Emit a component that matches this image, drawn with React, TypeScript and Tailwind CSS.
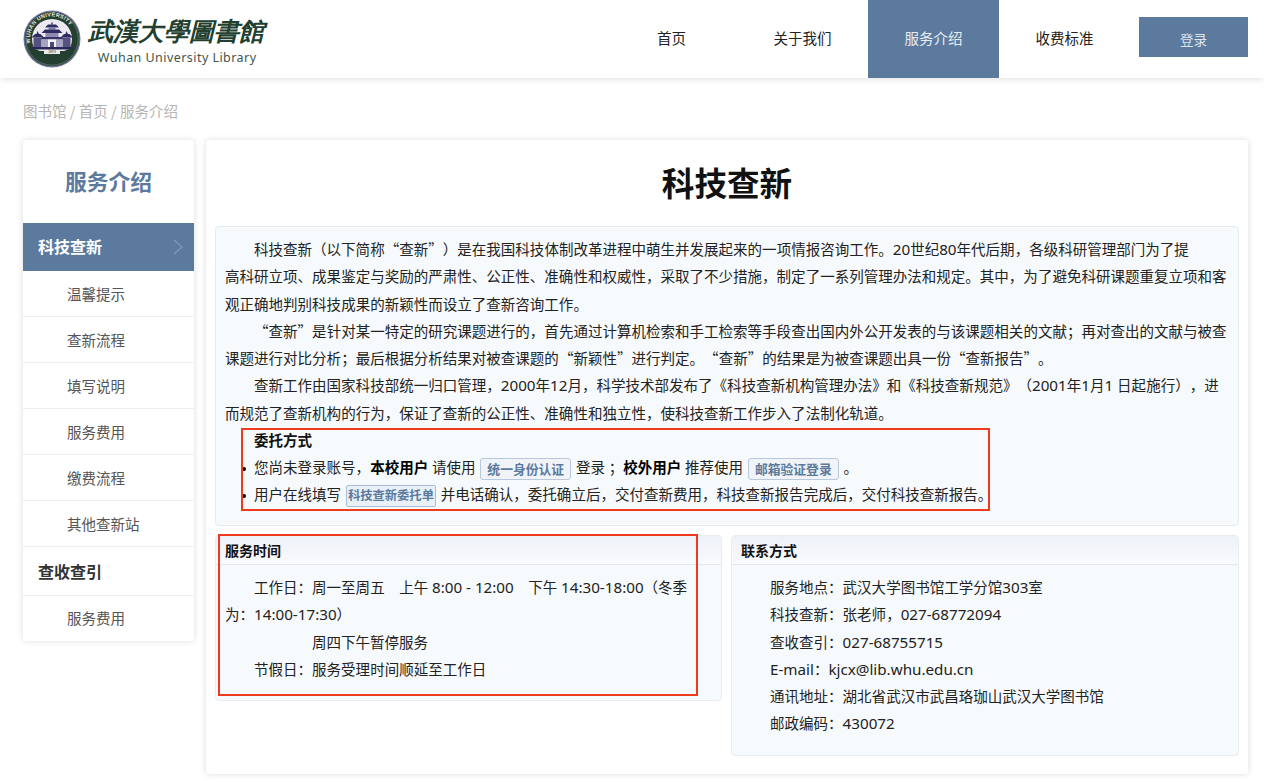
const navItems = [
  { label: "首页", active: false },
  { label: "关于我们", active: false },
  { label: "服务介绍", active: true },
  { label: "收费标准", active: false },
];

const subItems = ["温馨提示", "查新流程", "填写说明", "服务费用", "缴费流程", "其他查新站"];

const contacts = [
  "服务地点：武汉大学图书馆工学分馆303室",
  "科技查新：张老师，027-68772094",
  "查收查引：027-68755715",
  "E-mail：kjcx@lib.whu.edu.cn",
  "通讯地址：湖北省武汉市武昌珞珈山武汉大学图书馆",
  "邮政编码：430072",
];

// curly quotes come from the CJK font so they stay full width, latin runs sit a bit larger
function Zh({ text }: { text: string }) {
  return (
    <>
      {text.split(/([“”]|[0-9A-Za-z@.:-][0-9A-Za-z@.: -]*)/).map((part, i) => {
        if (part === "“" || part === "”") {
          return (
            <span key={i} className="leading-none font-['Noto_Sans_CJK_SC',sans-serif]">
              {part}
            </span>
          );
        }
        if (/^[0-9A-Za-z@.:-]/.test(part)) {
          return (
            <span key={i} className="text-[15.2px] leading-none">
              {part}
            </span>
          );
        }
        return part;
      })}
    </>
  );
}

function Seal() {
  return (
    <svg width="58" height="58" viewBox="0 0 58 58" className="shrink-0">
      <defs>
        <path id="seal-arc" d="M7.5 33A22 22 0 1 1 50.5 33" />
      </defs>
      <circle cx="29" cy="29" r="28.5" fill="#77759c" />
      <circle cx="29" cy="29" r="27.3" fill="#233f30" />
      <circle cx="29" cy="29" r="26.2" fill="none" stroke="#8a9a90" strokeWidth="0.5" />
      <circle cx="29" cy="29" r="20" fill="#eceaf0" />
      <text fontSize="5.4" fontWeight="700" letterSpacing="0.35" fill="#e8ebe6" fontFamily="Liberation Sans, sans-serif">
        <textPath href="#seal-arc">WUHAN UNIVERSITY</textPath>
      </text>
      <path d="M29 11.5l1 3h-2z" fill="#2f2c62" />
      <path d="M25 14.5h8l3 3H22z" fill="#2f2c62" />
      <path d="M25.5 17.5h7v2h-7z" fill="#7a78a0" />
      <path d="M22 19.5h14l3.5 3.5h-21z" fill="#2f2c62" />
      <path d="M22.5 23h13v4h-13z" fill="#8c8aae" />
      <path d="M19 27h20l2 2.5H17z" fill="#37346a" />
      <path d="M14.5 21l1.5 3h1.5l3.5 3.5H8.5L12 24h1.5z" fill="#2f2c62" />
      <path d="M43.5 21l1.5 3h1.5l3.5 3.5H37.5L41 24h1.5z" fill="#2f2c62" />
      <path d="M10.5 27.5h8V37h-8zM39.5 27.5h8V37h-8z" fill="#55527f" />
      <path d="M18 29.5h22V37H18z" fill="#a5a3c0" />
      <path d="M25 29.5h8V37h-8z" fill="#f3f3f6" />
      <path d="M27 32h4v5h-4z" fill="#4a477a" />
      <path d="M9 37h40l1.5 2.5h-43z" fill="#2a2858" />
      <path d="M9.5 38A20.5 20.5 0 0 0 48.5 38L41 41H17z" fill="#233f30" />
      <path d="M21 40.5h16V44H21z" fill="#eceaf0" />
      <text x="29" y="43.4" textAnchor="middle" fontSize="3.4" fill="#233f30" fontFamily="Liberation Sans, sans-serif">
        1893
      </text>
    </svg>
  );
}

function Logo() {
  return (
    <div className="flex items-center gap-[7px]">
      <Seal />
      <div className="flex flex-col items-center">
        <div className="h-[37px] text-[25.2px] leading-[37px] tracking-[0.2px] text-[#233f30] font-bold italic [font-family:serif] whitespace-nowrap">
          武漢大學圖書館
        </div>
        <div className="pl-[2px] pt-[1px] text-[12.5px] leading-[14px] tracking-[0.45px] text-[#45554b] whitespace-nowrap">
          Wuhan University Library
        </div>
      </div>
    </div>
  );
}

function Header() {
  return (
    <header className="flex h-[78px] items-center justify-between bg-white pl-[23px] pr-4 shadow-[0_2px_6px_rgba(0,0,0,0.1)]">
      <Logo />
      <div className="flex h-full items-center">
        <nav className="flex h-full">
          {navItems.map((n) => (
            <a
              key={n.label}
              className={
                n.active
                  ? "flex w-[131px] items-center justify-center bg-[#5b7a9e] pb-[1px] text-[#e8edf3]"
                  : "flex w-[131px] items-center justify-center pb-[1px] text-[#222]"
              }
            >
              {n.label}
            </a>
          ))}
        </nav>
        <button className="mb-[4px] ml-[9px] h-10 w-[109px] bg-[#5b7a9e] pt-[6px] text-[13.5px] text-[#dfe6ee]">登录</button>
      </div>
    </header>
  );
}

function Sidebar() {
  return (
    <aside className="h-[501px] w-[171px] shrink-0 rounded-[3px] bg-white shadow-[0_0_6px_rgba(0,0,0,0.14)]">
      <div className="flex h-[83px] items-center justify-center pt-[2px] text-[21.8px] font-bold text-[#5b7a9e]">服务介绍</div>
      <div className="flex h-[48px] items-center justify-between bg-[#5b7a9e] pb-[1px] pl-[15px] pr-[10px] text-[16px] font-bold text-white">
        <span>科技查新</span>
        <svg width="12" height="18" viewBox="0 0 12 18" fill="none" stroke="#7f9ab9" strokeWidth="1.2">
          <path d="M2 2l8 7-8 7" />
        </svg>
      </div>
      {subItems.map((s) => (
        <div key={s} className="flex h-[46px] items-center border-b border-[#eeeeee] pl-[44px] pt-[2px] text-[#555]">
          {s}
        </div>
      ))}
      <div className="flex h-[49px] items-center border-b border-[#eeeeee] pl-[15px] pt-[1px] text-[16px] font-bold text-[#333]">查收查引</div>
      <div className="flex h-[46px] items-center pb-[1px] pl-[44px] text-[#555]">服务费用</div>
    </aside>
  );
}

function Btn({ children, tight }: { children: string; tight?: boolean }) {
  return (
    <span
      className={
        tight
          ? "mx-[1px] inline-block h-[22px] rounded-[2px] border border-[#a9bdd6] bg-[#eaf0f7] px-[1px] align-middle text-[12.3px] leading-[20px] font-bold text-[#5b7a9e]"
          : "mx-[1px] inline-block h-[22px] rounded-[3px] border border-[#b9c8da] bg-[#f0f3f7] px-[6px] align-middle text-[12.8px] leading-[20px] font-bold text-[#5b7a9e]"
      }
    >
      {children}
    </span>
  );
}

function Panel({ title, className, children }: { title: string; className: string; children: React.ReactNode }) {
  return (
    <section className={"rounded-[4px] border border-[#e8edf2] bg-[#f7fafc] " + className}>
      <h3 className="flex h-[29px] items-center border-b border-[#e3e8ef] bg-gradient-to-b from-[#eef1f8] to-[#f8fafc] pl-[9px] text-[14px] font-bold text-[#111]">
        {title}
      </h3>
      {children}
    </section>
  );
}

function Bullet({ children }: { children: React.ReactNode }) {
  return (
    <li className="h-[27.25px] before:mr-[8.5px] before:inline-block before:h-1 before:w-1 before:rounded-full before:bg-black before:align-middle before:content-['']">
      {children}
    </li>
  );
}

function Content() {
  return (
    <main className="relative h-[634px] w-[1042px] rounded-[3px] bg-white px-[9px] shadow-[0_0_6px_rgba(0,0,0,0.14)]">
      <h1 className="flex h-[86px] items-center justify-center pt-[3px] text-[32.6px] font-bold text-[#111]">科技查新</h1>
      <div className="h-[300px] whitespace-nowrap rounded-[4px] border border-[#e6ebf0] bg-[#f7fafc] pl-[9px] pt-[9px] leading-[27.25px] text-[#222]">
        <p className="indent-[29px]"><Zh text="科技查新（以下简称“查新”）是在我国科技体制改革进程中萌生并发展起来的一项情报咨询工作。20世纪80年代后期，各级科研管理部门为了提" /></p>
        <p>高科研立项、成果鉴定与奖励的严肃性、公正性、准确性和权威性，采取了不少措施，制定了一系列管理办法和规定。其中，为了避免科研课题重复立项和客</p>
        <p>观正确地判别科技成果的新颖性而设立了查新咨询工作。</p>
        <p className="indent-[29px]"><Zh text="“查新”是针对某一特定的研究课题进行的，首先通过计算机检索和手工检索等手段查出国内外公开发表的与该课题相关的文献；再对查出的文献与被查" /></p>
        <p><Zh text="课题进行对比分析；最后根据分析结果对被查课题的“新颖性”进行判定。“查新”的结果是为被查课题出具一份“查新报告”。" /></p>
        <p className="indent-[29px]"><Zh text="查新工作由国家科技部统一归口管理，2000年12月，科学技术部发布了《科技查新机构管理办法》和《科技查新规范》（2001年1月1 日起施行），进" /></p>
        <p>而规范了查新机构的行为，保证了查新的公正性、准确性和独立性，使科技查新工作步入了法制化轨道。</p>
        <p className="pl-[29px] font-bold text-[#111]">委托方式</p>
        <ul className="pl-[16.5px]">
          <Bullet>您尚未登录账号，<b className="text-black">本校用户</b> 请使用 <Btn>统一身份认证</Btn> 登录 ；<b className="text-black">校外用户</b> 推荐使用 <Btn>邮箱验证登录</Btn> 。</Bullet>
          <Bullet>用户在线填写 <Btn tight>科技查新委托单</Btn> 并电话确认，委托确立后，交付查新费用，科技查新报告完成后，交付科技查新报告。</Bullet>
        </ul>
      </div>
      <div className="mt-[9px] flex items-start justify-between">
        <Panel title="服务时间" className="h-[166px] w-[507px]">
          <div className="pl-[9px] pt-[9px] leading-[27.25px] text-[#222]">
            <p className="w-[470px] indent-[29px]"><Zh text="工作日：周一至周五　上午 8:00 - 12:00　下午 14:30-18:00（冬季为：14:00-17:30）" /></p>
            <p className="pl-[87px]">周四下午暂停服务</p>
            <p className="pl-[29px]">节假日：服务受理时间顺延至工作日</p>
          </div>
        </Panel>
        <Panel title="联系方式" className="h-[221px] w-[508px]">
          <div className="pl-[38px] pt-[9px] leading-[27.25px] text-[#222]">
            {contacts.map((c) => (
              <p key={c}><Zh text={c} /></p>
            ))}
          </div>
        </Panel>
      </div>
      <div className="pointer-events-none absolute left-[35px] top-[288px] h-[83px] w-[749px] border-2 border-[#f03a1e]" />
      <div className="pointer-events-none absolute left-[12px] top-[394px] h-[162px] w-[480px] border-2 border-[#f03a1e]" />
    </main>
  );
}

export default function App() {
  return (
    <div className="min-h-[783px] bg-white text-[14.52px] [text-spacing-trim:space-all] font-['Noto_Sans','Noto_Sans_CJK_SC',sans-serif]">
      <Header />
      <div className="px-[23px] pt-[23px] pb-[19px] leading-[20px] text-[#b5b5b5] font-['Noto_Sans_CJK_SC',sans-serif]">图书馆 / 首页 / 服务介绍</div>
      <div className="flex gap-3 pl-[23px]">
        <Sidebar />
        <Content />
      </div>
    </div>
  );
}
